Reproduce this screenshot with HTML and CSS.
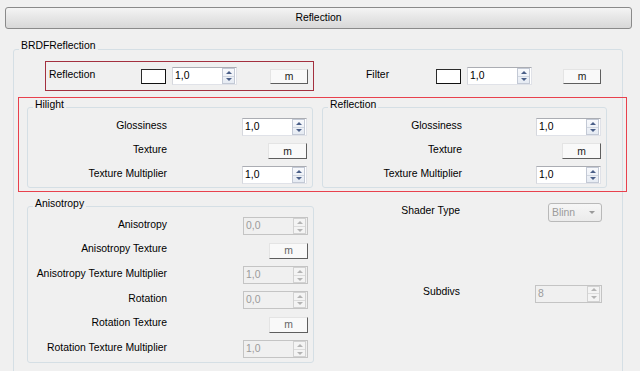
FILE: index.html
```html
<!DOCTYPE html>
<html lang="en">
<head>
    <meta charset="UTF-8">
    <title>Reflection</title>
    <link rel="stylesheet" href="styles.css">
</head>
<body>
    <div class="rollout-title">Reflection</div>

    <div class="panel">
        <fieldset class="group brdf">
            <legend>BRDFReflection</legend>

            <!-- reflection / filter colours -->
            <div class="color-row">
                <div class="mark mark-dark color-set">
                    <span class="color-label">Reflection</span>
                    <span class="swatch"></span>
                    <div class="spin"><span class="val">1,0</span><span class="arrows"><i class="up"></i><i class="down"></i></span></div>
                    <button class="mbtn">m</button>
                </div>
                <div class="color-set filter">
                    <span class="color-label">Filter</span>
                    <span class="swatch"></span>
                    <div class="spin"><span class="val">1,0</span><span class="arrows"><i class="up"></i><i class="down"></i></span></div>
                    <button class="mbtn">m</button>
                </div>
            </div>

            <!-- hilight and reflection lobes -->
            <div class="mark mark-bright lobes">
                <fieldset class="group sub hilight">
                    <legend>Hilight</legend>
                    <div class="row"><label>Glossiness</label><div class="spin"><span class="val">1,0</span><span class="arrows"><i class="up"></i><i class="down"></i></span></div></div>
                    <div class="row"><label>Texture</label><button class="mbtn">m</button></div>
                    <div class="row"><label>Texture Multiplier</label><div class="spin"><span class="val">1,0</span><span class="arrows"><i class="up"></i><i class="down"></i></span></div></div>
                </fieldset>
                <fieldset class="group sub refl">
                    <legend>Reflection</legend>
                    <div class="row"><label>Glossiness</label><div class="spin"><span class="val">1,0</span><span class="arrows"><i class="up"></i><i class="down"></i></span></div></div>
                    <div class="row"><label>Texture</label><button class="mbtn">m</button></div>
                    <div class="row"><label>Texture Multiplier</label><div class="spin"><span class="val">1,0</span><span class="arrows"><i class="up"></i><i class="down"></i></span></div></div>
                </fieldset>
            </div>

            <div class="lower">
                <fieldset class="group sub aniso">
                    <legend>Anisotropy</legend>
                    <div class="row"><label>Anisotropy</label><div class="spin off"><span class="val">0,0</span><span class="arrows"><i class="up"></i><i class="down"></i></span></div></div>
                    <div class="row"><label>Anisotropy Texture</label><button class="mbtn">m</button></div>
                    <div class="row"><label>Anisotropy Texture Multiplier</label><div class="spin off"><span class="val">1,0</span><span class="arrows"><i class="up"></i><i class="down"></i></span></div></div>
                    <div class="row"><label>Rotation</label><div class="spin off"><span class="val">0,0</span><span class="arrows"><i class="up"></i><i class="down"></i></span></div></div>
                    <div class="row"><label>Rotation Texture</label><button class="mbtn">m</button></div>
                    <div class="row"><label>Rotation Texture Multiplier</label><div class="spin off"><span class="val">1,0</span><span class="arrows"><i class="up"></i><i class="down"></i></span></div></div>
                </fieldset>

                <div class="side">
                    <div class="row shader"><label>Shader Type</label><div class="dropdown">Blinn</div></div>
                    <div class="row subdivs"><label>Subdivs</label><div class="spin off wide"><span class="val">8</span><span class="arrows"><i class="up"></i><i class="down"></i></span></div></div>
                </div>
            </div>
        </fieldset>
    </div>
</body>
</html>
```

FILE: styles.css
```css
* {
    box-sizing: border-box;
}
body {
    margin: 0;
    height: 371px;
    overflow: hidden;
    background-color: #f0f0f0;
    font-family: "Liberation Sans", Arial, sans-serif;
    font-size: 10.4px;
    color: #000;
}
.rollout-title {
    margin: 7px 8px 0 5px;
    height: 22px;
    line-height: 20px;
    text-align: center;
    border: 1px solid #8a8a8a;
    border-radius: 3px;
    background: linear-gradient(#f4f4f4, #e7e7e7 45%, #d8d8d8);
}
.panel {
    padding: 11px 17px 0 13px;
}
fieldset.group {
    margin: 0;
    padding: 0;
    min-width: 0;
    border: 1px solid #d5dfe5;
    border-radius: 3px;
}
legend {
    margin-left: 5px;
    padding: 0 2px 6px;
    line-height: 12px;
}
.brdf {
    padding-bottom: 14px !important;
}
.sub legend {
    padding-bottom: 4px;
}

/* annotation boxes */
.mark {
    border: 1px solid;
}
.mark-dark {
    border-color: #a3303f;
}
.mark-bright {
    border-color: #e8414d;
}

/* colour rows */
.color-row {
    display: flex;
    align-items: center;
    margin-top: 3px;
}
.color-set {
    display: flex;
    align-items: center;
    height: 30px;
}
.color-row > .mark {
    margin-left: 31px;
    width: 269px;
    padding-left: 3px;
}
.color-label {
    width: 92px;
    padding-bottom: 3px;
}
.filter {
    margin-left: 52px;
}
.filter .color-label {
    width: 70px;
}
.swatch {
    width: 25px;
    height: 15px;
    margin-right: 6px;
    background: #fff;
    border: 1px solid #2b2b2b;
    border-right-color: #111;
    border-bottom-color: #111;
}
.color-set .mbtn {
    margin-left: 33px;
    width: 38px;
    height: 15px;
}
.filter .mbtn {
    margin-left: 31px;
}

/* spinner */
.spin {
    display: flex;
    width: 65px;
    height: 18px;
    background: #fff;
    border: 1px solid #e0e2e8;
    border-top-color: #abadb3;
    border-left-color: #d5d7dd;
}
.spin.wide {
    width: 67px;
}
.spin .val {
    flex: 1;
    padding-left: 2px;
    line-height: 16px;
}
.arrows {
    display: flex;
    flex-direction: column;
    width: 13px;
    margin: 0 1px 0 0;
    border: 1px solid #c3c9d5;
    background: linear-gradient(#f8f9fc, #e6ebf3);
}
.arrows i {
    flex: 1;
    display: flex;
    align-items: center;
    justify-content: center;
}
.arrows .up {
    border-bottom: 1px solid #d0d6e0;
}
.arrows .up::before {
    content: "";
    border-left: 3px solid transparent;
    border-right: 3px solid transparent;
    border-bottom: 3px solid #4a5f88;
}
.arrows .down::before {
    content: "";
    border-left: 3px solid transparent;
    border-right: 3px solid transparent;
    border-top: 3px solid #4a5f88;
}
.spin.off {
    background: #f0f0f0;
    border-color: #c4c4c4;
    color: #9b9b9b;
}
.spin.off .arrows {
    border-color: #d2d2d2;
    background: #f4f4f4;
}
.spin.off .arrows .up {
    border-bottom-color: #dcdcdc;
}
.spin.off .up::before {
    border-bottom-color: #b4b4b4;
}
.spin.off .down::before {
    border-top-color: #b4b4b4;
}

/* map button */
.mbtn {
    width: 39px;
    height: 16px;
    padding: 0;
    font: inherit;
    line-height: 13px;
    color: #222;
    background: #f9f9f9;
    border: 1px solid;
    border-color: #e4e4e4 #5e5e5e #5e5e5e #e4e4e4;
    border-radius: 0;
}

/* lobes */
.lobes {
    display: flex;
    gap: 9px;
    margin: 6px -5px 0 4px;
    padding: 1px 0 3px 8px;
}
.hilight {
    flex: 0 0 286px;
}
.refl {
    flex: 0 0 285px;
}
.sub {
    padding: 0 5px 0 0 !important;
}
.row {
    display: flex;
    align-items: center;
    height: 24px;
}
.row label {
    width: 139px;
    text-align: right;
    padding-bottom: 4px;
}
.row .spin,
.row .mbtn,
.row .dropdown {
    margin-left: auto;
}

/* lower part */
.lower {
    display: flex;
    margin-top: 6px;
    padding-left: 13px;
}
.aniso {
    flex: 0 0 287px;
}
.aniso .row {
    height: 24.6px;
}
.aniso .mbtn {
    color: #666;
}
.side {
    flex: 0 0 285px;
    margin-left: 8px;
    padding-right: 5px;
}
.side .row {
    height: 25px;
}
.side label {
    width: 138px;
}
.shader {
    margin-top: 2px;
}
.subdivs {
    margin-top: 56px;
}
.dropdown {
    position: relative;
    width: 54px;
    height: 19px;
    padding-left: 3px;
    line-height: 17px;
    color: #9b9b9b;
    border: 1px solid #b9b9b9;
    border-radius: 3px;
    background: linear-gradient(#f6f6f6, #ebebeb);
}
.dropdown::after {
    content: "";
    position: absolute;
    right: 6px;
    top: 7px;
    border-left: 3px solid transparent;
    border-right: 3px solid transparent;
    border-top: 3px solid #9a9a9a;
}
```
